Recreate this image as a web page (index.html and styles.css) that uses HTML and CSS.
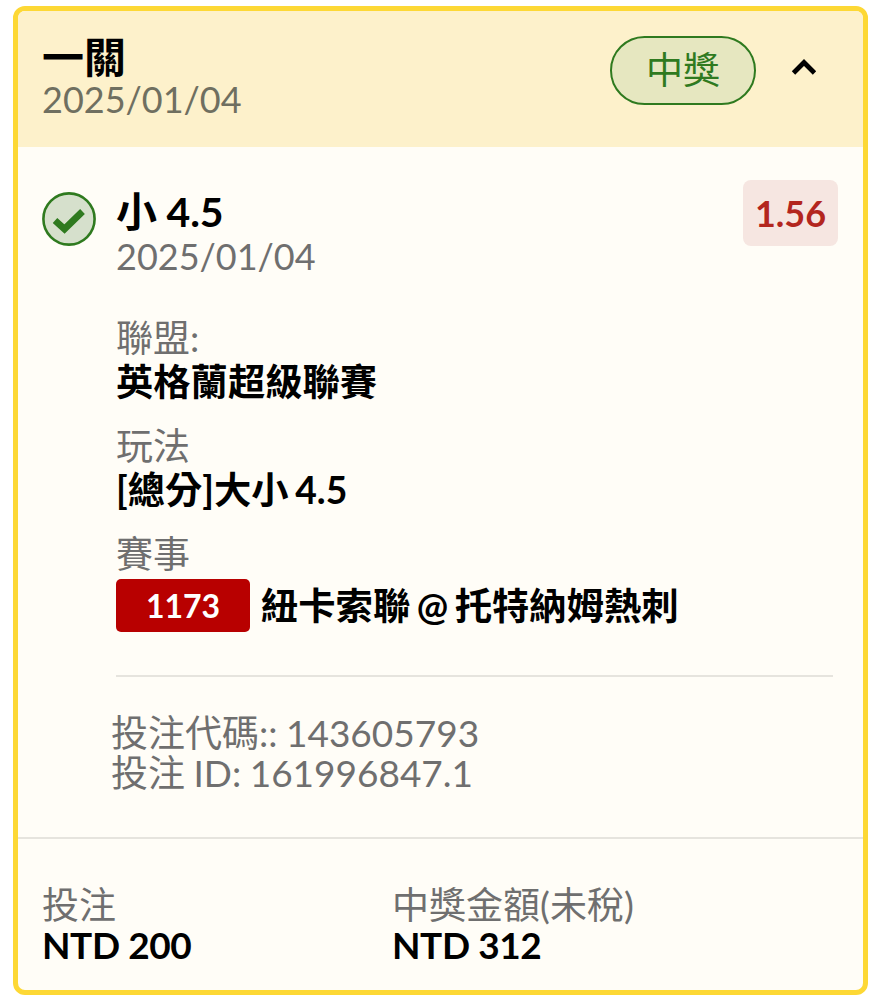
FILE: index.html
```html
<!DOCTYPE html>
<html lang="zh-Hant">
<head>
<meta charset="utf-8">
<title>投注紀錄</title>
<link rel="stylesheet" href="styles.css">
</head>
<body>
<div class="bet-card">
	<div class="bet-head">
		<div class="head-text">
			<div class="head-title">一關</div>
			<div class="head-date">2025/01/04</div>
		</div>
		<span class="win-pill">中獎</span>
		<svg class="chevron" width="26" height="20" viewBox="0 0 26 20"><path d="M2.5 16 L13 5.5 L23.5 16" fill="none" stroke="#000" stroke-width="4.8"/></svg>
	</div>
	<div class="bet-leg">
		<svg class="check" width="54" height="54" viewBox="0 0 54 54">
			<circle cx="27" cy="27" r="25.6" fill="#d6e0cc" stroke="#2f7a1f" stroke-width="2.6"/>
			<path d="M13 28.5 L22.5 37 L40.5 19.5" fill="none" stroke="#2f7a1f" stroke-width="6.8"/>
		</svg>
		<div class="leg-main">
			<div class="leg-top">
				<div class="leg-name">
					<div class="leg-title">小 4.5</div>
					<div class="leg-date">2025/01/04</div>
				</div>
				<span class="odds">1.56</span>
			</div>
			<div class="field first">
				<div class="label">聯盟:</div>
				<div class="value">英格蘭超級聯賽</div>
			</div>
			<div class="field">
				<div class="label">玩法</div>
				<div class="value">[總分]大小 4.5</div>
			</div>
			<div class="field">
				<div class="label">賽事</div>
				<div class="value match"><span class="match-no">1173</span>紐卡索聯 @ 托特納姆熱刺</div>
			</div>
		</div>
	</div>
	<div class="codes">
		<div>投注代碼:: 143605793</div>
		<div>投注 ID: 161996847.1</div>
	</div>
	<div class="bet-foot">
		<div class="foot-col">
			<div class="label">投注</div>
			<div class="foot-val">NTD 200</div>
		</div>
		<div class="foot-col">
			<div class="label">中獎金額(未稅)</div>
			<div class="foot-val">NTD 312</div>
		</div>
	</div>
</div>
</body>
</html>
```

FILE: styles.css
```css
body{
	margin: 0;
	padding: 6px 15px 5px 13px;
	background: #ffffff;
	font-family: Lato, "Noto Sans CJK TC", sans-serif;
	color: #000000;
}
.bet-card{
	border: 5px solid #fdd835;
	border-radius: 12px;
	background: #fffdf7;
	overflow: hidden;
}
.bet-head{
	display: flex;
	align-items: flex-start;
	box-sizing: border-box;
	height: 136px;
	padding: 23px 46px 0 24px;
	background: #fdf1cb;
}
.head-text{
	flex: 1;
}
.head-title{
	font-size: 42px;
	font-weight: 700;
	line-height: 46px;
}
.head-date, .leg-date{
	font-size: 36px;
	line-height: 38px;
	color: #6f6f60;
}
.leg-date{
	line-height: 40px;
	margin-top: -1px;
	color: #6f6f6f;
}
.win-pill{
	display: block;
	width: 146px;
	height: 69px;
	margin-top: 2px;
	box-sizing: border-box;
	border: 2.5px solid #2f7a1f;
	border-radius: 35px;
	background: #e6e7c0;
	color: #2f7a1f;
	font-size: 37px;
	line-height: 64px;
	text-align: center;
}
.chevron{
	margin: 23px 0 0 35px;
}
.bet-leg{
	display: flex;
	padding: 33px 25px 0 24px;
}
.check{
	flex: none;
	margin: 12px 20px 0 0;
}
.leg-main{
	flex: 1;
	padding-bottom: 43px;
	border-bottom: 2px solid #e6e4de;
	margin-right: 5px;
}
.leg-top{
	display: flex;
	justify-content: space-between;
	align-items: flex-start;
}
.leg-name{
	padding-top: 7px;
	padding-bottom: 1px;
}
.leg-title{
	font-size: 41px;
	font-weight: 700;
	line-height: 50px;
	letter-spacing: -0.2px;
}
.odds{
	width: 95px;
	height: 66px;
	margin-right: -5px;
	border-radius: 8px;
	background: #f6e6e1;
	color: #b3261e;
	font-size: 36px;
	font-weight: 700;
	line-height: 67px;
	text-align: center;
}
.field{
	margin-top: 20px;
}
.field.first{
	margin-top: 39px;
}
.label{
	font-size: 37px;
	line-height: 44px;
	color: #6f6f6f;
}
.value{
	font-size: 37.3px;
	font-weight: 700;
	line-height: 44px;
	word-spacing: -2.5px;
}
.match{
	display: flex;
	align-items: center;
	margin-top: 3px;
}
.match-no{
	width: 134px;
	height: 53px;
	margin-right: 11px;
	border-radius: 5px;
	background: #b80000;
	color: #ffffff;
	font-size: 32px;
	font-weight: 700;
	line-height: 54px;
	text-align: center;
}
.codes{
	padding: 36px 25px 44px 93px;
	border-bottom: 2px solid #e6e4de;
	font-size: 37px;
	line-height: 40px;
	word-spacing: -1px;
	color: #6f6f6f;
}
.bet-foot{
	display: flex;
	padding: 44px 24px 27px 24px;
}
.foot-col{
	width: 350px;
}
.foot-val{
	font-size: 37px;
	font-weight: 700;
	line-height: 36px;
	letter-spacing: -0.4px;
}
```
